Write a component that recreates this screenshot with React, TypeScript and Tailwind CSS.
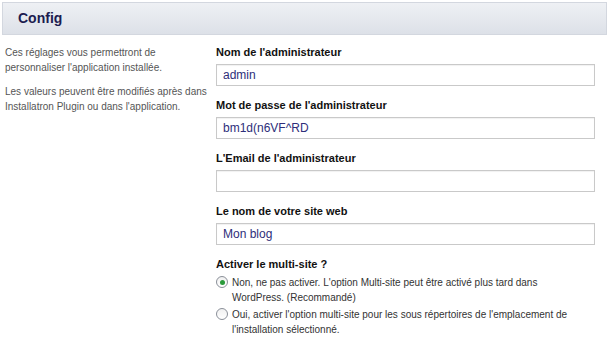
import React from "react";

const font = { fontFamily: '"Liberation Sans", Arial, sans-serif' };

function Field({ label, value }: { label: string; value: string }) {
  return (
    <div className="flex flex-col">
      <div className="text-[11px] font-bold text-[#111] leading-[14px] h-[14px]">{label}</div>
      <div className="mt-[5px] h-[22px] border border-[#c9c9c9] bg-white flex items-center pl-[6px] text-[12px] text-[#2e2e7a] shadow-[inset_0_1px_1px_rgba(0,0,0,0.06)]">
        {value}
      </div>
    </div>
  );
}

function Radio({ checked }: { checked?: boolean }) {
  return (
    <div className="w-[12px] h-[12px] rounded-full border border-[#8a8f98] bg-gradient-to-b from-[#f0f0f0] to-white flex items-center justify-center shrink-0 mt-[1px]">
      {checked && <div className="w-[5px] h-[5px] rounded-full bg-[#2a9a3a]" />}
    </div>
  );
}

export default function App() {
  return (
    <div className="w-[609px] h-[348px] bg-white overflow-hidden" style={font}>
      <div className="mx-[2px] mt-[2px] h-[33px] border border-[#d3d7df] bg-gradient-to-b from-[#eef0f4] to-[#dde1e8] flex items-center pl-[15px]">
        <span className="text-[14px] font-bold text-[#1c1c50]">Config</span>
      </div>
      <div className="flex pt-[10px]">
        <div className="w-[211px] pl-[5px] text-[10px] leading-[15px] text-[#555] whitespace-nowrap">
          <p>Ces réglages vous permettront de<br />personnaliser l'application installée.</p>
          <p className="mt-[9px]">Les valeurs peuvent être modifiés après dans<br />Installatron Plugin ou dans l'application.</p>
        </div>
        <div className="flex-1 pl-[5px] pr-[14px] flex flex-col gap-[12px]">
          <Field label="Nom de l'administrateur" value="admin" />
          <Field label="Mot de passe de l'administrateur" value="bm1d(n6VF^RD" />
          <Field label="L'Email de l'administrateur" value="" />
          <Field label="Le nom de votre site web" value="Mon blog" />
          <div className="flex flex-col">
            <div className="text-[11px] font-bold text-[#111] leading-[14px]">Activer le multi-site ?</div>
            <div className="mt-[4px] flex gap-[4px] text-[10px] leading-[15px] text-[#333] whitespace-nowrap">
              <Radio checked />
              <span>Non, ne pas activer. L'option Multi-site peut être activé plus tard dans<br />WordPress. (Recommandé)</span>
            </div>
            <div className="mt-[2px] flex gap-[4px] text-[10px] leading-[15px] text-[#333] whitespace-nowrap">
              <Radio />
              <span>Oui, activer l'option multi-site pour les sous répertoires de l'emplacement de<br />l'installation sélectionné.</span>
            </div>
          </div>
        </div>
      </div>
    </div>
  );
}
